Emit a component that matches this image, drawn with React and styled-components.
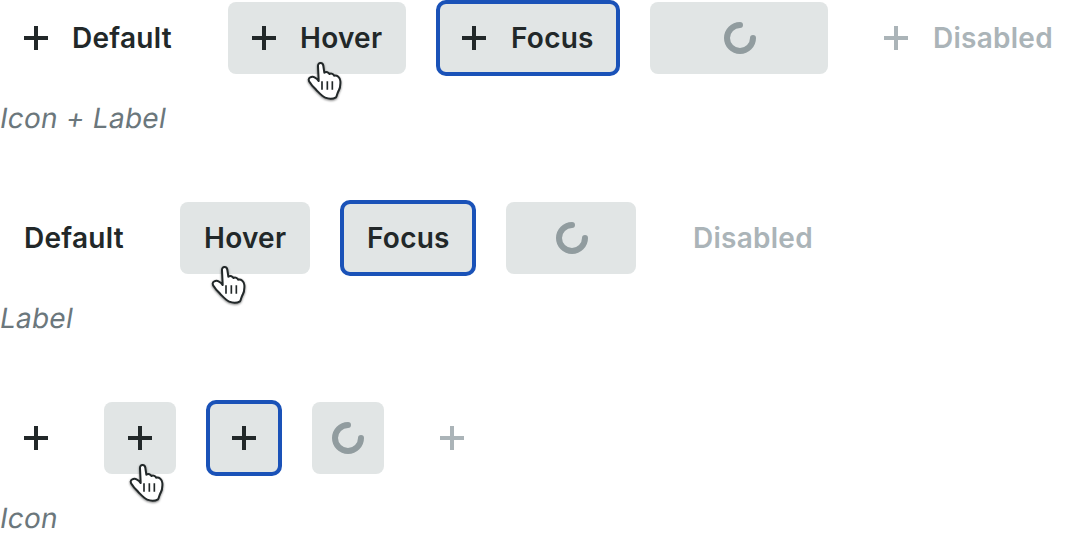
import React from 'react'
import styled, { createGlobalStyle } from 'styled-components'

const App = () => {
    return (
        <>
            <GlobalStyle />
            <PageStyled>
                <Variant caption="Icon + Label" widths={[196, 178, 180, 178, 218]} icon label cursor={[71.5, 53]} />
                <Variant caption="Label" widths={[148, 130, 132, 130, 170]} label cursor={[23.5, 56.7]} />
                <Variant caption="Icon" widths={[72, 72, 72, 72, 72]} icon cursor={[17.5, 55]} />
            </PageStyled>
        </>
    )
}

export default App

const states = ['Default', 'Hover', 'Focus', 'Loading', 'Disabled']

const Variant = ({ caption, widths, icon, label, cursor }) => {
    return (
        <VariantStyled>
            <ButtonRow>
                {
                    states.map((state, i) => {
                        return (
                            <Button key={state} $state={state} $width={widths[i]} $label={label} aria-label={state} disabled={state === 'Disabled'}>
                                {state === 'Loading' && <Spinner />}
                                {state !== 'Loading' && icon && <Plus />}
                                {state !== 'Loading' && label && <span>{state}</span>}
                                {state === 'Hover' && <Pointer $left={cursor[0]} $top={cursor[1]} />}
                            </Button>
                        )
                    })
                }
            </ButtonRow>
            <Caption>{caption}</Caption>
        </VariantStyled>
    )
}

const Plus = () => (
    <svg width="24" height="24" viewBox="0 0 24 24" shapeRendering="crispEdges">
        <path d="M10 0h4v10h10v4H14v10h-4V14H0v-4h10z" fill="currentColor" />
    </svg>
)

const Spinner = () => (
    <svg width="32" height="32" viewBox="0 0 32 32" fill="none">
        <path d="M16 3A13 13 0 1 0 29 16" stroke="#919c9f" strokeWidth="6" strokeLinecap="round" />
    </svg>
)

const Pointer = (props) => (
    <PointerStyled {...props} viewBox="0 0 150 150">
        <path
            d="M56 74L54 34C53 21 69 21 70 33L73 53C79 49 86 52 88 57C94 54 101 57 102 62C112 60 120 67 121 78C122 92 121 98 116 107C112 113 111 122 108 127C99 132 84 131 76 128C65 123 57 113 49 105C43 98 36 93 31 84C24 76 25 70 31 67C39 63 46 66 56 78Z"
            fill="#fff"
            stroke="#222829"
            strokeWidth="6"
            strokeLinejoin="round"
        />
        <path d="M66 79v25M82 79v25M97 79v25" stroke="#222829" strokeWidth="5" />
    </PointerStyled>
)

const GlobalStyle = createGlobalStyle`
    body{
        margin: 0;
        background: #fff;
        font-family: Inter, sans-serif;
        overflow: hidden;
    }
`;

const PageStyled = styled.main`
    display: flex;
    flex-direction: column;
    gap: 64px;
    padding-top: 2px;
`;

const VariantStyled = styled.section`
    display: flex;
    flex-direction: column;
    align-items: flex-start;
    gap: 24px;
`;

const ButtonRow = styled.div`
    display: flex;
    gap: 32px;
`;

const Button = styled.button`
    position: relative;
    display: flex;
    flex: none;
    align-items: center;
    justify-content: ${({ $state }) => $state === 'Loading' ? 'center' : 'flex-start'};
    gap: 24px;
    width: ${({ $width }) => $width}px;
    height: 72px;
    padding: 0 0 0 ${({ $state, $label }) => $state !== 'Loading' ? 24 : $label ? 2 : 0}px;
    border: 0;
    border-radius: 8px;
    background: ${({ $state }) => ['Hover', 'Focus', 'Loading'].includes($state) ? '#e1e5e5' : 'transparent'};
    outline: ${({ $state }) => $state === 'Focus' ? '4px solid #1a52b8' : 'none'};
    outline-offset: -2px;
    color: ${({ $state }) => $state === 'Disabled' ? '#abb4b8' : '#222829'};
    font: 600 28px/40px Inter, sans-serif;
    letter-spacing: 0.26px;
    white-space: nowrap;
    svg{
        flex: none;
    }
    span{
        margin-left: ${({ $state }) => ['Focus', 'Disabled'].includes($state) ? 1 : 0}px;
    }
`;

const PointerStyled = styled.svg`
    position: absolute;
    left: ${({ $left }) => $left}px;
    top: ${({ $top }) => $top}px;
    z-index: 1;
    width: 50px;
    height: 50px;
    filter: drop-shadow(0.3px 1px 1px rgba(0, 0, 0, 0.5));
`;

/* slanted roman, keeps the two-storey "a" */
const Caption = styled.p`
    margin: 0;
    padding-left: 3.3px;
    margin-left: -3px;
    color: #6b777c;
    font: 400 28px/40px Inter, sans-serif;
    letter-spacing: 0.26px;
    transform: skewX(-9.4deg);
`;
